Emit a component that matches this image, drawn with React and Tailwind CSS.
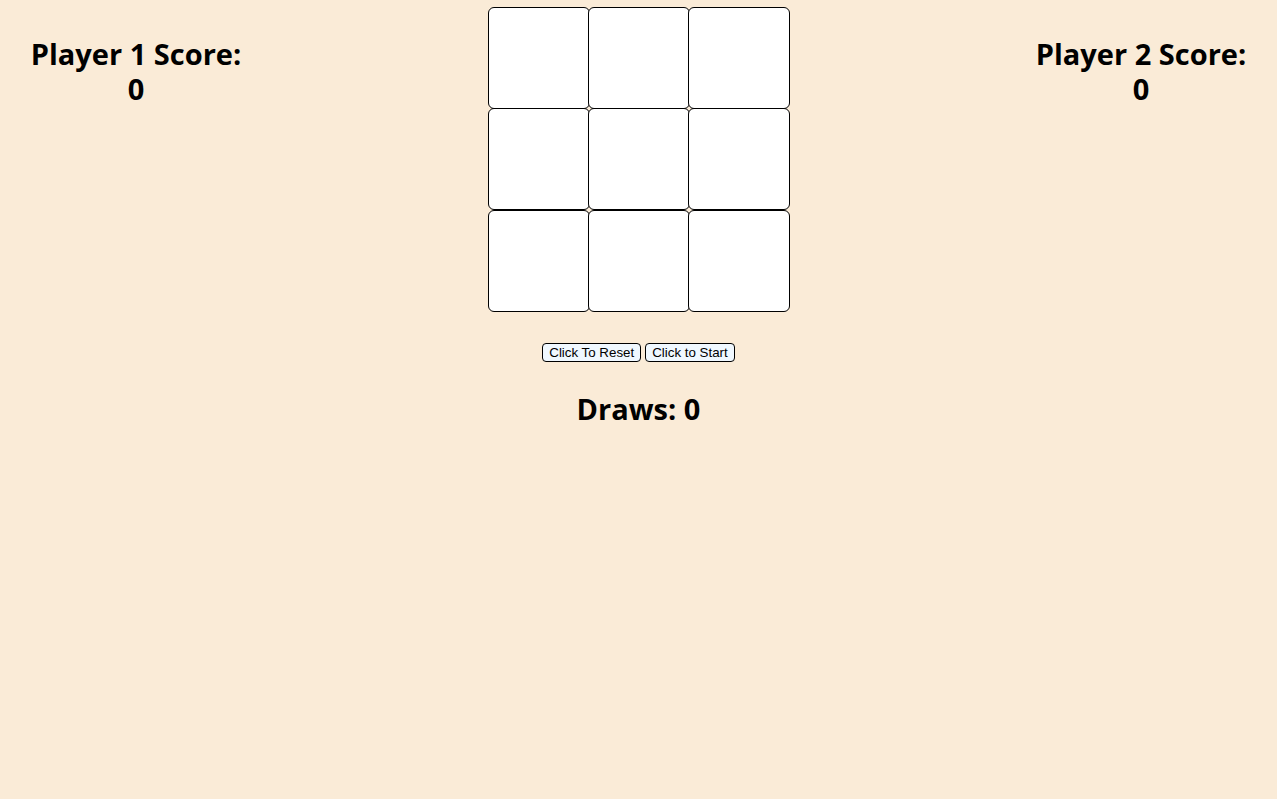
import React from "react";

const cells = [0, 1, 2, 3, 4, 5, 6, 7, 8];

const App = () => {
  return (
    <div className="min-h-[799px] w-full bg-[#faebd7] font-['Open_Sans',sans-serif] text-black">
      <div className="flex justify-between px-[30px] pt-[7px]">
        {/* Player 1 */}
        <div className="pt-[29px] text-center text-[29px] font-bold leading-[35px] w-[212px]">
          <div>Player 1 Score:</div>
          <div>0</div>
        </div>

        {/* Board */}
        <div className="grid grid-cols-[100px_100px_100px] grid-rows-[101px_102px_102px] w-[302px] h-[305px]">
          {cells.map((i) => (
            <div
              key={i}
              className="w-[102px] h-[102px] bg-white border border-black rounded-[6px]"
            ></div>
          ))}
        </div>

        {/* Player 2 */}
        <div className="pt-[29px] text-center text-[29px] font-bold leading-[35px] w-[212px]">
          <div>Player 2 Score:</div>
          <div>0</div>
        </div>
      </div>

      <div className="flex justify-center gap-[4px] mt-[31px] font-['Liberation_Sans',sans-serif] text-[13.33px]">
        <button className="bg-[#f0f8ff] border border-black rounded-[4px] px-[6px] h-[19px] leading-[17px]">
          Click To Reset
        </button>
        <button className="bg-[#f0f8ff] border border-black rounded-[4px] px-[6px] h-[19px] leading-[17px]">
          Click to Start
        </button>
      </div>

      <div className="text-center text-[29px] font-bold leading-[34px] mt-[30px]">
        Draws: 0
      </div>
    </div>
  );
};

export default App;
